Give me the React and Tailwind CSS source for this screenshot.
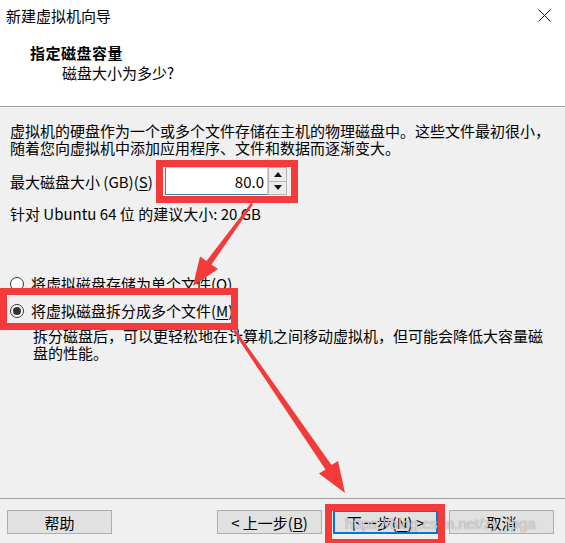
const font = { fontFamily: '"Noto Sans CJK SC", "Noto Sans", sans-serif' };

const Key = ({ k }) => (
  <>
    (<span className="underline underline-offset-2">{k}</span>)
  </>
);

function Radio({ checked, children }) {
  return (
    <div className="flex items-center h-[27px]">
      <span className="w-[14px] h-[14px] rounded-full border border-[#333] bg-white flex items-center justify-center">
        {checked && <span className="w-[8px] h-[8px] rounded-full bg-[#333]" />}
      </span>
      <span className="ml-[7px]">{children}</span>
    </div>
  );
}

function Button({ children, primary }) {
  return (
    <button
      type="button"
      className={`w-[105px] h-[24px] bg-[#e1e1e1] text-[15px] leading-none text-black flex items-center justify-center ${
        primary ? "border-2 border-[#0078d7]" : "border border-[#adadad]"
      }`}
    >
      {children}
    </button>
  );
}

function Spinner() {
  return (
    <div className="w-[19px] h-[28px] flex flex-col">
      <div className="flex-1 bg-[#ececec] border border-[#b5b5b5] flex items-center justify-center">
        <svg width="8" height="5" viewBox="0 0 8 5">
          <path d="M0 5 L4 0 L8 5 Z" fill="#111" />
        </svg>
      </div>
      <div className="flex-1 bg-[#ececec] border border-t-0 border-[#b5b5b5] flex items-center justify-center">
        <svg width="8" height="5" viewBox="0 0 8 5">
          <path d="M0 0 L4 5 L8 0 Z" fill="#111" />
        </svg>
      </div>
    </div>
  );
}

export default function App() {
  return (
    <div style={font} className="relative w-[565px] h-[543px] overflow-hidden bg-[#f0f0f0] text-black text-[15px] flex flex-col">
      {/* title bar + header */}
      <div className="bg-white border-b border-[#a0a0a0]">
        <div className="h-[30px] flex items-center justify-between pl-[6px] pr-[14px]">
          <span className="leading-none">新建虚拟机向导</span>
          <svg width="13" height="13" viewBox="0 0 13 13">
            <path d="M0.5 0.5 L12.5 12.5 M12.5 0.5 L0.5 12.5" stroke="#111" strokeWidth="1" />
          </svg>
        </div>
        <div className="pt-[13px] pb-[23px] leading-[20px]">
          <p className="pl-[30px] font-bold tracking-[0.5px]">指定磁盘容量</p>
          <p className="pl-[62px]">磁盘大小为多少?</p>
        </div>
      </div>

      {/* body */}
      <div className="flex-1 px-[10px] pt-[15px] leading-[17px]">
        <p className="whitespace-nowrap">
          虚拟机的硬盘作为一个或多个文件存储在主机的物理磁盘中。这些文件最初很小，
          <br />
          随着您向虚拟机中添加应用程序、文件和数据而逐渐变大。
        </p>

        <div className="mt-[11px] flex items-center">
          <span className="w-[155px] whitespace-nowrap">
            最大磁盘大小 (GB)<Key k="S" />
          </span>
          <div className="w-[103px] h-[28px] bg-white border border-[#d0d0d0] border-l-[#3c7fb1] border-b-[#3c7fb1] flex items-center justify-end pr-[3px]">
            80.0
          </div>
          <Spinner />
        </div>

        <p className="mt-[10px]">针对 Ubuntu 64 位 的建议大小: 20 GB</p>

        <div className="mt-[48px]">
          <Radio>
            将虚拟磁盘存储为单个文件<Key k="O" />
          </Radio>
          <Radio checked>
            将虚拟磁盘拆分成多个文件<Key k="M" />
          </Radio>
          <p className="mt-[3px] pl-[23px] whitespace-nowrap">
            拆分磁盘后，可以更轻松地在计算机之间移动虚拟机，但可能会降低大容量磁
            <br />
            盘的性能。
          </p>
        </div>
      </div>

      {/* footer */}
      <div className="border-t border-[#a0a0a0] h-[45px] flex items-start pt-[11px] pl-[7px] pr-[11px]">
        <Button>帮助</Button>
        <div className="ml-auto flex gap-[11px]">
          <Button>
            &lt; 上一步<Key k="B" />
          </Button>
          <Button primary>
            下一步<Key k="N" /> &gt;
          </Button>
          <Button>取消</Button>
        </div>
      </div>

      {/* watermark */}
      <span
        className="absolute left-[345px] top-[513px] text-[15px] text-white/70 whitespace-nowrap pointer-events-none [text-shadow:0_0_1px_#666]"
        style={{ fontFamily: '"Liberation Sans", Arial, sans-serif' }}
      >
        https://blog.csdn.net/zy_fpga
      </span>

      {/* red annotation boxes */}
      <div className="absolute left-[156px] top-[160px] w-[142px] h-[43px] border-[7px] border-[#f33b3b] pointer-events-none" />
      <div className="absolute left-0 top-[288px] w-[238px] h-[42px] border-[7px] border-[#f33b3b] pointer-events-none" />
      <div className="absolute left-[325px] top-[504px] w-[120px] h-[42px] border-[7px] border-[#f33b3b] pointer-events-none" />

      {/* red arrows */}
      <svg className="absolute inset-0 pointer-events-none" width="565" height="543" viewBox="0 0 565 543">
        <path d="M251 203 L253 204.5 L211.5 264.5 L218 269 L193 286 L200 256.5 L206.5 261 Z" fill="#f33b3b" />
        <path d="M233 331 L235.5 329.5 L331.5 465 L338 461 L345 493 L319 473.5 L325.5 469.5 Z" fill="#f33b3b" />
      </svg>
    </div>
  );
}
